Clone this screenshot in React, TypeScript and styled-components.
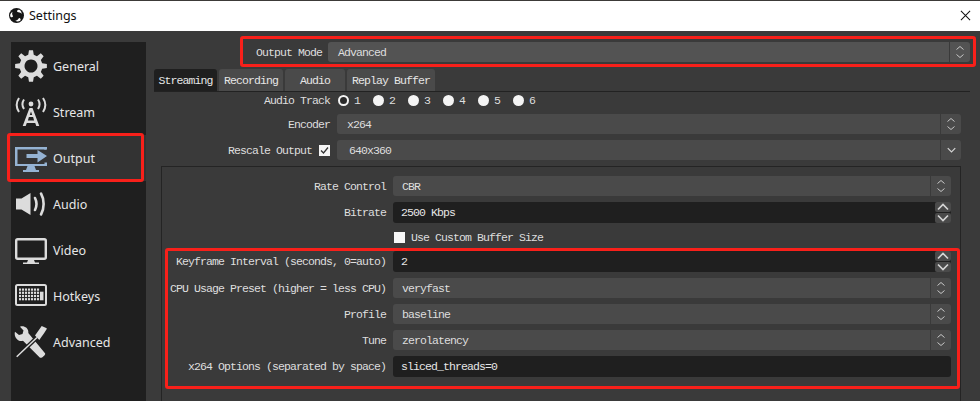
import React from "react";
import styled, { createGlobalStyle } from "styled-components";

const MONO = `"Liberation Mono", "DejaVu Sans Mono", monospace`;
const UI = `"Noto Sans", "Open Sans", sans-serif`;

const GlobalStyle = createGlobalStyle`
  html, body {
    margin: 0;
    padding: 0;
    background: #3a3a3a;
  }
`;

// 8 tooth gear, the points are worked out once
const gearPath = (() => {
  const teeth = 8;
  const pts: string[] = [];
  for (let i = 0; i < teeth; i++) {
    const a = (i * Math.PI * 2) / teeth - Math.PI / 2;
    const step = Math.PI / teeth;
    const corners: [number, number][] = [
      [11.5, a - step * 0.62],
      [16, a - step * 0.32],
      [16, a + step * 0.32],
      [11.5, a + step * 0.62],
    ];
    corners.forEach(([r, t]) => {
      pts.push(`${(17 + r * Math.cos(t)).toFixed(2)} ${(17 + r * Math.sin(t)).toFixed(2)}`);
    });
  }
  return `M${pts.join("L")}Z M17 10.5a6.5 6.5 0 1 0 0.01 0Z`;
})();

const Icon = ({ children }: { children: React.ReactNode }) => (
  <IconSvg viewBox="0 0 34 34">{children}</IconSvg>
);

const GeneralIcon = () => (
  <Icon>
    <path d={gearPath} fill="#dcdcdc" fillRule="evenodd" />
  </Icon>
);

const StreamIcon = () => (
  <Icon>
    <circle cx="17" cy="9" r="2.4" fill="#dcdcdc" />
    <path
      d="M10 4.500c-2 3-2 6.500 0 9.500M24 4.500c2 3 2 6.500 0 9.500M5 3c-3 4.500-3 9.500 0 14M29 3c3 4.500 3 9.500 0 14"
      fill="none"
      stroke="#dcdcdc"
      strokeWidth="2"
    />
    <path
      d="M15.500 13h3l6.800 18h-3l-1.100-3h-8.400l-1.100 3h-3ZM17 16.500l-1.200 3.500h2.400ZM14.900 22l-1 3.500h6.200l-1-3.500Z"
      fill="#dcdcdc"
      fillRule="evenodd"
    />
  </Icon>
);

const OutputIcon = () => (
  <Icon>
    <path
      d="M33 8.500V6H1v19h32v-3.500h-2.500V23H3.500V8.500h27v0.500Z"
      fill="#95b3d3"
    />
    <path d="M12.500 13h11V9l9.500 6-9.500 6.500V17h-11Z" fill="#95b3d3" />
    <path d="M13.500 25h7l1.500 4h3v2H9v-2h3Z" fill="#95b3d3" />
  </Icon>
);

const AudioIcon = () => (
  <Icon>
    <path d="M2 11.500h5.500L16.500 6v22l-9-5.500H2Z" fill="#dcdcdc" />
    <path
      d="M21 11c1.800 3.600 1.800 8.400 0 12M27 6.500c3.500 6 3.500 15 0 21"
      fill="none"
      stroke="#dcdcdc"
      strokeWidth="2.600"
      strokeLinecap="round"
    />
  </Icon>
);

const VideoIcon = () => (
  <Icon>
    <rect x="2.200" y="6.200" width="29.600" height="19.600" rx="1.500" fill="none" stroke="#dcdcdc" strokeWidth="2.400" />
    <path d="M14 27h6l1 2.500h4V31H9v-1.500h4Z" fill="#dcdcdc" />
  </Icon>
);

const keyCells = [0, 1, 2, 3].flatMap((row) =>
  Array.from({ length: 7 }, (_, col) => ({ x: 5 + col * 3, y: 9.500 + row * 3.200 }))
);

const HotkeysIcon = () => (
  <Icon>
    <rect x="2" y="6" width="30" height="20" rx="1.500" fill="none" stroke="#dcdcdc" strokeWidth="2" />
    {keyCells.map((k) => (
      <rect key={`${k.x}-${k.y}`} x={k.x} y={k.y} width="2.100" height="2.200" fill="#dcdcdc" />
    ))}
    <rect x="26" y="12.700" width="3.500" height="8.600" fill="#dcdcdc" />
  </Icon>
);

const AdvancedIcon = () => (
  <Icon>
    <path
      d="M1 6.700L5 10l3.500-1 1-3.500L6 1.700c4-1.500 9 1.500 8.300 6.300L31 28.300c.5 1-.2 1.800-1.500 3-1.500 1.500-2.500 1.800-3.500 1.400L9 15.800C4 17.500-.5 12 1 6.700Z"
      fill="#dcdcdc"
    />
    <path d="M23 12.500L2.700 31.700" fill="none" stroke="#1f1f1f" strokeWidth="4" />
    <path d="M23 12.500L2.700 31.700" fill="none" stroke="#dcdcdc" strokeWidth="1.500" />
    <path d="M27.700 1l5 2.300c.3 1-.5 2-7.400 11.700L21 10.500Z" fill="#dcdcdc" />
  </Icon>
);

const logoBlade = "M15 2.200c3.600.4 6.300 2.800 7 6-1.700-1.700-4.500-2.200-6.800-1.200-1.800.8-3.300-.2-3-2.200.1-1.300 1.300-2.500 2.800-2.600Z";

const ObsLogo = () => (
  <LogoSvg viewBox="0 0 28 28">
    <circle cx="14" cy="14" r="14" fill="#161616" />
    {[20, 140, 260].map((angle) => (
      <path key={angle} d={logoBlade} fill="#fff" transform={`rotate(${angle} 14 14)`} />
    ))}
  </LogoSvg>
);

const UpDown = () => (
  <svg width="10" height="16" viewBox="0 0 10 16">
    <path
      d="M1.500 5.500L5 2.500l3.500 3M1.500 10.500L5 13.500l3.500-3"
      fill="none"
      stroke="#c8c8c8"
      strokeWidth="1"
    />
  </svg>
);

const Chevron = ({ up, wide }: { up?: boolean; wide?: boolean }) => (
  <svg width={wide ? 12 : 9} height={wide ? 8 : 6} viewBox="0 0 12 8">
    <path
      d={up ? "M1 6.500L6 1.500l5 5" : "M1 1.500l5 5 5-5"}
      fill="none"
      stroke="#d4d4d4"
      strokeWidth={wide ? 1.700 : 1.600}
    />
  </svg>
);

const Combo = ({
  value,
  inset = 10,
  light,
  single,
}: {
  value: string;
  inset?: number;
  light?: boolean;
  single?: boolean;
}) => (
  <ComboBox $light={light}>
    <ComboText $inset={inset}>{value}</ComboText>
    <ComboButton>{single ? <Chevron /> : <UpDown />}</ComboButton>
  </ComboBox>
);

const TextInput = ({ value, spin }: { value: string; spin?: boolean }) => (
  <InputBox>
    <InputText>{value}</InputText>
    {spin && (
      <SpinColumn>
        <SpinButton>
          <Chevron up wide />
        </SpinButton>
        <SpinButton>
          <Chevron wide />
        </SpinButton>
      </SpinColumn>
    )}
  </InputBox>
);

const navItems = [
  { label: "General", icon: <GeneralIcon /> },
  { label: "Stream", icon: <StreamIcon /> },
  { label: "Output", icon: <OutputIcon />, active: true },
  { label: "Audio", icon: <AudioIcon /> },
  { label: "Video", icon: <VideoIcon /> },
  { label: "Hotkeys", icon: <HotkeysIcon /> },
  { label: "Advanced", icon: <AdvancedIcon /> },
];

const tabs = [
  { label: "Streaming", width: 63, active: true },
  { label: "Recording", width: 64 },
  { label: "Audio", width: 60 },
  { label: "Replay Buffer", width: 88 },
];

const tracks = ["1", "2", "3", "4", "5", "6"];

export default function App() {
  return (
    <Window>
      <GlobalStyle />
      <TitleBar>
        <ObsLogo />
        <TitleText>Settings</TitleText>
        <CloseIcon viewBox="0 0 12 12">
          <path d="M1 1l10 10M11 1L1 11" stroke="#111" strokeWidth="1.100" />
        </CloseIcon>
      </TitleBar>
      <Body>
        <Sidebar>
          {navItems.map((item) => (
            <NavItem key={item.label} $active={item.active}>
              {item.icon}
              <NavLabel>{item.label}</NavLabel>
              {item.active && <Highlight $top={-2} $right={2} $bottom={-1} $left={-4} />}
            </NavItem>
          ))}
        </Sidebar>
        <Main>
          <ModeRow>
            <Label>Output Mode</Label>
            <Combo value="Advanced" light />
            <Highlight $top={-6} $right={-6} $bottom={-5} $left={86} />
          </ModeRow>
          <TabBar>
            {tabs.map((tab) => (
              <Tab key={tab.label} $active={tab.active} $width={tab.width}>
                {tab.label}
              </Tab>
            ))}
          </TabBar>
          <TopFields>
            <TopRow $short>
              <Label>Audio Track</Label>
              <RadioGroup>
                {tracks.map((t, i) => (
                  <RadioItem key={t}>
                    <Radio $checked={i === 0} />
                    <span>{t}</span>
                  </RadioItem>
                ))}
              </RadioGroup>
            </TopRow>
            <TopRow>
              <Label>Encoder</Label>
              <Combo value="x264" />
            </TopRow>
            <TopRow>
              <CheckLabel>
                <Label>Rescale Output</Label>
                <CheckBox viewBox="0 0 11 11">
                  <rect width="11" height="11" fill="#f4f4f4" />
                  <path d="M2 5.500l2.500 2.500L9 2.500" fill="none" stroke="#333" strokeWidth="1.300" />
                </CheckBox>
              </CheckLabel>
              <Combo value="640x360" inset={12} single />
            </TopRow>
          </TopFields>
          <GroupBox>
            <GroupRow>
              <Label>Rate Control</Label>
              <Combo value="CBR" inset={9} />
            </GroupRow>
            <GroupRow>
              <Label>Bitrate</Label>
              <TextInput value="2500 Kbps" spin />
            </GroupRow>
            <GroupRow $short>
              <span />
              <CheckLine>
                <BlankCheck />
                <Label>Use Custom Buffer Size</Label>
              </CheckLine>
            </GroupRow>
            <MarkedRows>
              <GroupRow>
                <Label>Keyframe Interval (seconds, 0=auto)</Label>
                <TextInput value="2" spin />
              </GroupRow>
              <GroupRow>
                <Label>CPU Usage Preset (higher = less CPU)</Label>
                <Combo value="veryfast" inset={9} />
              </GroupRow>
              <GroupRow>
                <Label>Profile</Label>
                <Combo value="baseline" inset={9} />
              </GroupRow>
              <GroupRow>
                <Label>Tune</Label>
                <Combo value="zerolatency" inset={9} />
              </GroupRow>
              <GroupRow>
                <Label>x264 Options (separated by space)</Label>
                <TextInput value="sliced_threads=0" />
              </GroupRow>
              <Highlight $top={-3} $right={-9} $bottom={-12} $left={3} />
            </MarkedRows>
          </GroupBox>
        </Main>
      </Body>
    </Window>
  );
}

const Window = styled.div`
  width: 980px;
  height: 401px;
  overflow: hidden;
  display: flex;
  flex-direction: column;
  background: #3a3a3a;
  border-top: 1px solid #3c3a38;
  box-sizing: border-box;
`;

const TitleBar = styled.header`
  height: 30px;
  flex: none;
  display: flex;
  align-items: center;
  padding: 0 9px 2px 9px;
  box-sizing: border-box;
  background: #fff;
`;

const LogoSvg = styled.svg`
  width: 15px;
  height: 15px;
`;

const TitleText = styled.span`
  margin-left: 5px;
  font: 12.500px ${UI};
  color: #111;
`;

const CloseIcon = styled.svg`
  width: 11px;
  height: 11px;
  margin-left: auto;
`;

const Body = styled.div`
  flex: 1;
  min-height: 0;
  display: flex;
  gap: 8px;
  padding: 11px 10px 0 11px;
`;

const Sidebar = styled.nav`
  width: 135px;
  flex: none;
  padding-top: 1px;
  background: #1f1f1f;
`;

const NavItem = styled.div<{ $active?: boolean }>`
  position: relative;
  height: 46px;
  display: flex;
  align-items: center;
  gap: 5px;
  padding-left: 3px;
  background: ${(p) => (p.$active ? "#333333" : "transparent")};
`;

const IconSvg = styled.svg`
  width: 34px;
  height: 34px;
  flex: none;
`;

const NavLabel = styled.span`
  font: 12.500px ${UI};
  color: #e6e6e6;
`;

const Highlight = styled.div<{ $top: number; $right: number; $bottom: number; $left: number }>`
  position: absolute;
  top: ${(p) => p.$top}px;
  right: ${(p) => p.$right}px;
  bottom: ${(p) => p.$bottom}px;
  left: ${(p) => p.$left}px;
  border: 3px solid #f8201a;
  border-radius: 3px;
  pointer-events: none;
`;

const Main = styled.main`
  flex: 1;
  min-width: 0;
  display: flex;
  flex-direction: column;
`;

const Label = styled.span`
  font: 11.500px ${MONO};
  letter-spacing: -0.900px;
  color: #dedede;
  text-align: right;
  white-space: nowrap;
`;

const ModeRow = styled.div`
  position: relative;
  display: grid;
  grid-template-columns: 168px 1fr;
  column-gap: 6px;
  align-items: center;
  height: 20px;
`;

const TabBar = styled.div`
  display: flex;
  gap: 2px;
  height: 23px;
  margin-top: 7px;
  border-bottom: 1px solid #222;
`;

const Tab = styled.div<{ $active?: boolean; $width: number }>`
  width: ${(p) => p.$width}px;
  height: 22px;
  display: flex;
  align-items: center;
  justify-content: center;
  border-radius: 3px 3px 0 0;
  background: ${(p) => (p.$active ? "#1f1f1f" : "#4a4a4a")};
  font: 11.500px ${MONO};
  letter-spacing: -0.900px;
  color: #e6e6e6;
`;

const TopFields = styled.section`
  display: flex;
  flex-direction: column;
  gap: 6px;
  padding: 0 9px 0 0;
`;

const TopRow = styled.div<{ $short?: boolean }>`
  display: grid;
  grid-template-columns: 176px 1fr;
  column-gap: 7px;
  align-items: center;
  height: ${(p) => (p.$short ? 16 : 20)}px;
`;

const RadioGroup = styled.div`
  display: flex;
  gap: 13px;
  padding-left: 1px;
`;

const RadioItem = styled.div`
  width: 22px;
  display: flex;
  align-items: center;
  gap: 5px;
  font: 11.500px ${MONO};
  color: #dedede;
`;

const Radio = styled.i<{ $checked?: boolean }>`
  width: 11px;
  height: 11px;
  flex: none;
  box-sizing: border-box;
  border-radius: 50%;
  background: ${(p) => (p.$checked ? "#2a2a2a" : "#f4f4f4")};
  border: ${(p) => (p.$checked ? "2px solid #f4f4f4" : "none")};
`;

const CheckLabel = styled.div`
  display: flex;
  justify-content: flex-end;
  align-items: center;
  gap: 7px;
`;

const CheckBox = styled.svg`
  width: 11px;
  height: 11px;
`;

const GroupBox = styled.section`
  display: flex;
  flex-direction: column;
  gap: 6px;
  margin: 6px 9px 0 7px;
  padding: 9px 9px 60px 0;
  border: 1px solid #242424;
`;

const GroupRow = styled.div<{ $short?: boolean }>`
  display: grid;
  grid-template-columns: 224px 1fr;
  column-gap: 7px;
  align-items: center;
  min-height: ${(p) => (p.$short ? 16 : 20)}px;
`;

const MarkedRows = styled.div`
  position: relative;
  display: flex;
  flex-direction: column;
  gap: 6px;
`;

const CheckLine = styled.div`
  display: flex;
  align-items: center;
  gap: 6px;
  padding-left: 1px;
`;

const BlankCheck = styled.i`
  width: 11px;
  height: 11px;
  background: #f8f8f8;
`;

const ComboBox = styled.div<{ $light?: boolean }>`
  height: 20px;
  display: flex;
  align-items: center;
  border-radius: 3px;
  background: ${(p) => (p.$light ? "#535353" : "#4a4a4a")};
`;

const ComboText = styled.span<{ $inset: number }>`
  flex: 1;
  padding-left: ${(p) => p.$inset}px;
  font: 11.500px ${MONO};
  letter-spacing: -0.900px;
  color: #dedede;
`;

const ComboButton = styled.div`
  width: 20px;
  height: 20px;
  display: flex;
  align-items: center;
  justify-content: center;
  border-left: 1px solid #3a3a3a;
`;

const InputBox = styled.div`
  height: 21px;
  display: flex;
  align-items: center;
  border-radius: 3px;
  background: #1f1f1f;
`;

const InputText = styled.span`
  flex: 1;
  padding-left: 8px;
  font: 11.500px ${MONO};
  letter-spacing: -0.900px;
  color: #e6e6e6;
`;

const SpinColumn = styled.div`
  width: 16px;
  height: 21px;
  display: flex;
  flex-direction: column;
  gap: 1px;
`;

const SpinButton = styled.div`
  flex: 1;
  display: flex;
  align-items: center;
  justify-content: center;
  border-radius: 2px;
  background: #4a4a4a;
`;
